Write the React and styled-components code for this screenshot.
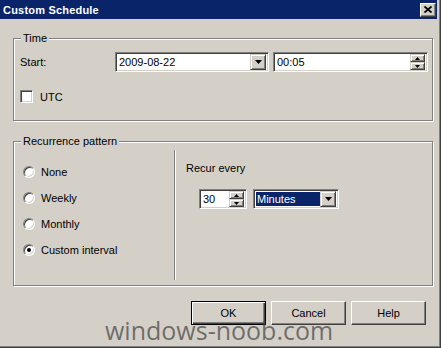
import React from "react";
import styled, { createGlobalStyle } from "styled-components";

const GlobalStyle = createGlobalStyle`
  html, body {
    margin: 0;
    padding: 0;
    background: #d4d0c8;
  }
  * {
    box-sizing: border-box;
  }
`;

// window frame

const Window = styled.div`
  position: relative;
  width: 441px;
  height: 348px;
  overflow: hidden;
  background: #d4d0c8;
  font-family: "Liberation Sans", Arial, sans-serif;
  font-size: 11px;
  color: #000;
  box-shadow: inset -1px -1px #404040, inset -2px -2px #808080;
`;

const TitleBar = styled.div`
  display: flex;
  align-items: center;
  justify-content: space-between;
  height: 19px;
  margin-right: 4px;
  padding: 0 1px 0 3px;
  background: #0a246a;
`;

const TitleText = styled.div`
  color: #fff;
  font-weight: bold;
  font-size: 11px;
  letter-spacing: 0.2px;
`;

const CloseButton = styled.div`
  display: flex;
  align-items: center;
  justify-content: center;
  width: 16px;
  height: 14px;
  background: #d4d0c8;
  border: 1px solid;
  border-color: #fff #404040 #404040 #fff;
  box-shadow: inset -1px -1px #808080;
`;

const Content = styled.div`
  padding: 19px 8px 0 13px;
`;

// group boxes

const Group = styled.div`
  position: relative;
  width: 420px;
  height: ${(p) => p.$h}px;
  border: 1px solid #808080;
  box-shadow: inset 1px 1px #fff, 1px 1px #fff;
  margin-bottom: ${(p) => p.$mb || 0}px;
`;

const Legend = styled.div`
  position: absolute;
  top: -7px;
  left: 7px;
  padding: 0 2px;
  background: #d4d0c8;
  line-height: 13px;
`;

const TimeBody = styled.div`
  padding: 13px 0 0 6px;
`;

const Row = styled.div`
  display: flex;
  align-items: center;
  height: 20px;
`;

const FieldLabel = styled.div`
  width: 95px;
`;

// sunken inputs

const Field = styled.div`
  display: flex;
  align-items: center;
  width: ${(p) => p.$w}px;
  height: 20px;
  margin-left: ${(p) => p.$ml || 0}px;
  padding: 2px;
  background: #fff;
  border: 1px solid;
  border-color: #808080 #fff #fff #808080;
  box-shadow: inset 1px 1px #404040, inset -1px -1px #d4d0c8;
`;

const Value = styled.div`
  flex: 1;
  height: 100%;
  display: flex;
  align-items: center;
  padding-left: 1px;
  background: ${(p) => (p.$selected ? "#0a246a" : "transparent")};
  color: ${(p) => (p.$selected ? "#fff" : "#000")};
`;

const DropButton = styled.div`
  display: flex;
  align-items: center;
  justify-content: center;
  width: 16px;
  height: 16px;
  background: #d4d0c8;
  border: 1px solid;
  border-color: #d4d0c8 #404040 #404040 #d4d0c8;
  box-shadow: inset 1px 1px #fff, inset -1px -1px #808080;
`;

const Spinner = styled.div`
  display: flex;
  flex-direction: column;
  width: 15px;
  height: 16px;
`;

const SpinButton = styled.div`
  display: flex;
  align-items: center;
  justify-content: center;
  height: 8px;
  background: #d4d0c8;
  border: 1px solid;
  border-color: #d4d0c8 #404040 #404040 #d4d0c8;
  box-shadow: inset 1px 1px #fff, inset -1px -1px #808080;
`;

const CheckRow = styled.div`
  display: flex;
  align-items: center;
  margin-top: 18px;
`;

const CheckBox = styled.div`
  width: 13px;
  height: 13px;
  background: #fff;
  border: 1px solid;
  border-color: #808080 #fff #fff #808080;
  box-shadow: inset 1px 1px #404040, inset -1px -1px #d4d0c8;
`;

const CheckLabel = styled.div`
  margin-left: 7px;
`;

// recurrence

const RecurBody = styled.div`
  display: flex;
  height: 100%;
`;

const RadioColumn = styled.div`
  width: 160px;
  padding: 17px 0 0 9px;
`;

const RadioRow = styled.div`
  display: flex;
  align-items: center;
  height: 26px;
`;

const Radio = styled.div`
  display: flex;
  align-items: center;
  justify-content: center;
  width: 12px;
  height: 12px;
  border-radius: 50%;
  background: #fff;
  border: 1px solid;
  border-color: #808080 #fff #fff #808080;
  box-shadow: inset 1px 1px #404040, inset -1px -1px #d4d0c8;

  &::after {
    content: "";
    display: ${(p) => (p.$checked ? "block" : "none")};
    width: 4px;
    height: 4px;
    border-radius: 50%;
    background: #000;
  }
`;

const RadioLabel = styled.div`
  margin-left: 6px;
`;

const Separator = styled.div`
  width: 2px;
  height: 130px;
  margin-top: 8px;
  border-left: 1px solid #808080;
  border-right: 1px solid #fff;
`;

const RecurColumn = styled.div`
  padding: 20px 0 0 10px;
`;

const RecurLabel = styled.div`
  line-height: 13px;
`;

const RecurRow = styled.div`
  display: flex;
  align-items: center;
  margin: 14px 0 0 13px;
`;

// buttons

const ButtonRow = styled.div`
  display: flex;
  justify-content: flex-end;
  gap: 5px;
  margin: 15px 7px 0 0;
`;

const Button = styled.div`
  display: flex;
  align-items: center;
  justify-content: center;
  width: 75px;
  height: 24px;
  background: #d4d0c8;
  border: 1px solid;
  border-color: ${(p) => (p.$default ? "#000" : "#fff #404040 #404040 #fff")};
  box-shadow: ${(p) =>
    p.$default
      ? "inset 1px 1px #fff, inset -1px -1px #404040, inset -2px -2px #808080"
      : "inset -1px -1px #808080"};
`;

// overlay watermark
const Watermark = styled.div`
  position: absolute;
  left: 105px;
  top: 318px;
  font-family: "Open Sans", sans-serif;
  font-size: 25px;
  line-height: 25px;
  color: rgba(70, 70, 70, 0.72);
  white-space: nowrap;
  pointer-events: none;
`;

const DownArrow = () => (
  <svg width="7" height="4" viewBox="0 0 7 4">
    <polygon points="0,0 7,0 3.5,4" fill="#000" />
  </svg>
);

const SmallArrow = ({ up }) => (
  <svg width="5" height="3" viewBox="0 0 5 3">
    <polygon points={up ? "0,3 5,3 2.5,0" : "0,0 5,0 2.5,3"} fill="#000" />
  </svg>
);

const CloseGlyph = () => (
  <svg width="8" height="7" viewBox="0 0 8 7">
    <path d="M0.5 0.5 L7.5 6.5 M7.5 0.5 L0.5 6.5" stroke="#000" strokeWidth="1.8" />
  </svg>
);

const SpinBox = ({ w, ml, value }) => (
  <Field $w={w} $ml={ml}>
    <Value>{value}</Value>
    <Spinner>
      <SpinButton>
        <SmallArrow up />
      </SpinButton>
      <SpinButton>
        <SmallArrow />
      </SpinButton>
    </Spinner>
  </Field>
);

const Combo = ({ w, ml, value, selected }) => (
  <Field $w={w} $ml={ml}>
    <Value $selected={selected}>{value}</Value>
    <DropButton>
      <DownArrow />
    </DropButton>
  </Field>
);

const patterns = [
  { label: "None" },
  { label: "Weekly" },
  { label: "Monthly" },
  { label: "Custom interval", checked: true },
];

export default function App() {
  return (
    <>
      <GlobalStyle />
      <Window>
        <TitleBar>
          <TitleText>Custom Schedule</TitleText>
          <CloseButton>
            <CloseGlyph />
          </CloseButton>
        </TitleBar>

        <Content>
          <Group $h={83} $mb={20}>
            <Legend>Time</Legend>
            <TimeBody>
              <Row>
                <FieldLabel>Start:</FieldLabel>
                <Combo w={154} value="2009-08-22" />
                <SpinBox w={155} ml={4} value="00:05" />
              </Row>
              <CheckRow>
                <CheckBox />
                <CheckLabel>UTC</CheckLabel>
              </CheckRow>
            </TimeBody>
          </Group>

          <Group $h={145}>
            <Legend>Recurrence pattern</Legend>
            <RecurBody>
              <RadioColumn>
                {patterns.map((p) => (
                  <RadioRow key={p.label}>
                    <Radio $checked={p.checked} />
                    <RadioLabel>{p.label}</RadioLabel>
                  </RadioRow>
                ))}
              </RadioColumn>
              <Separator />
              <RecurColumn>
                <RecurLabel>Recur every</RecurLabel>
                <RecurRow>
                  <SpinBox w={48} value="30" />
                  <Combo w={86} ml={6} value="Minutes" selected />
                </RecurRow>
              </RecurColumn>
            </RecurBody>
          </Group>

          <ButtonRow>
            <Button $default>OK</Button>
            <Button>Cancel</Button>
            <Button>Help</Button>
          </ButtonRow>
        </Content>

        <Watermark>windows-noob.com</Watermark>
      </Window>
    </>
  );
}
